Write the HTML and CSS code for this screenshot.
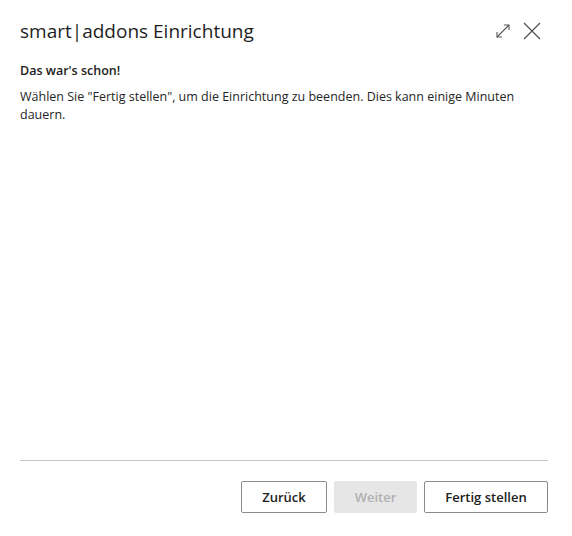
FILE: index.html
```html
<!DOCTYPE html>
<html lang="de">
<head>
<meta charset="utf-8">
<link rel="stylesheet" href="styles.css">
</head>
<body>
<div class="dialog">
  <header class="header">
    <h1 class="title">smart|addons Einrichtung</h1>
    <div class="actions">
      <button class="icon-btn" aria-label="Maximieren">
        <svg width="16" height="16" viewBox="0 0 16 16" fill="none" stroke="#555" stroke-width="1.1">
          <path d="M2 14 L14 2"/>
          <path d="M9 2 H14 V7"/>
          <path d="M2 9 V14 H7"/>
        </svg>
      </button>
      <button class="icon-btn" aria-label="Schließen">
        <svg width="18" height="18" viewBox="0 0 18 18" fill="none" stroke="#555" stroke-width="1.3">
          <path d="M1 1 L17 17 M17 1 L1 17"/>
        </svg>
      </button>
    </div>
  </header>
  <main class="content">
    <h2 class="subtitle">Das war's schon!</h2>
    <p class="text">Wählen Sie "Fertig stellen", um die Einrichtung zu beenden. Dies kann einige Minuten dauern.</p>
  </main>
  <footer class="footer">
    <button class="btn">Zurück</button>
    <button class="btn btn-disabled" disabled>Weiter</button>
    <button class="btn btn-wide">Fertig stellen</button>
  </footer>
</div>
</body>
</html>
```
FILE: styles.css
```css
* { box-sizing: border-box; }
html, body { margin: 0; padding: 0; background: #fff; }
body {
  font-family: "Open Sans", "Noto Sans", sans-serif;
  color: #212121;
  width: 572px;
  height: 536px;
}
.dialog {
  display: flex;
  flex-direction: column;
  height: 536px;
  padding: 0 24px 23px 20px;
}
.header {
  display: flex;
  align-items: center;
  justify-content: space-between;
  height: 58px;
  padding-top: 3px;
}
.title {
  margin: 0;
  font-size: 19px;
  font-weight: 400;
  color: #1e1e1e;
}
.actions {
  display: flex;
  align-items: center;
  gap: 12px;
  margin-right: 7px;
}
.icon-btn {
  border: 0;
  background: none;
  padding: 0;
  display: flex;
}
.content { flex: 1; }
.subtitle {
  margin: 4px 0 8px;
  font-size: 12.5px;
  font-weight: 600;
  line-height: 18px;
}
.text {
  margin: 0;
  font-size: 12.5px;
  line-height: 18px;
  color: #262626;
}
.footer {
  border-top: 1px solid #c8c8c8;
  display: flex;
  justify-content: flex-end;
  gap: 7px;
  padding-top: 20px;
}
.btn {
  font-family: inherit;
  font-size: 13px;
  font-weight: 600;
  color: #212121;
  background: #fff;
  border: 1px solid #8a8a8a;
  border-radius: 2px;
  height: 32px;
  min-width: 86px;
  padding: 0 19px;
}
.btn-disabled {
  background: #e6e6e6;
  border-color: #e6e6e6;
  color: #b0b0b0;
  min-width: 83px;
}
.btn-wide { min-width: 124px; }
```
